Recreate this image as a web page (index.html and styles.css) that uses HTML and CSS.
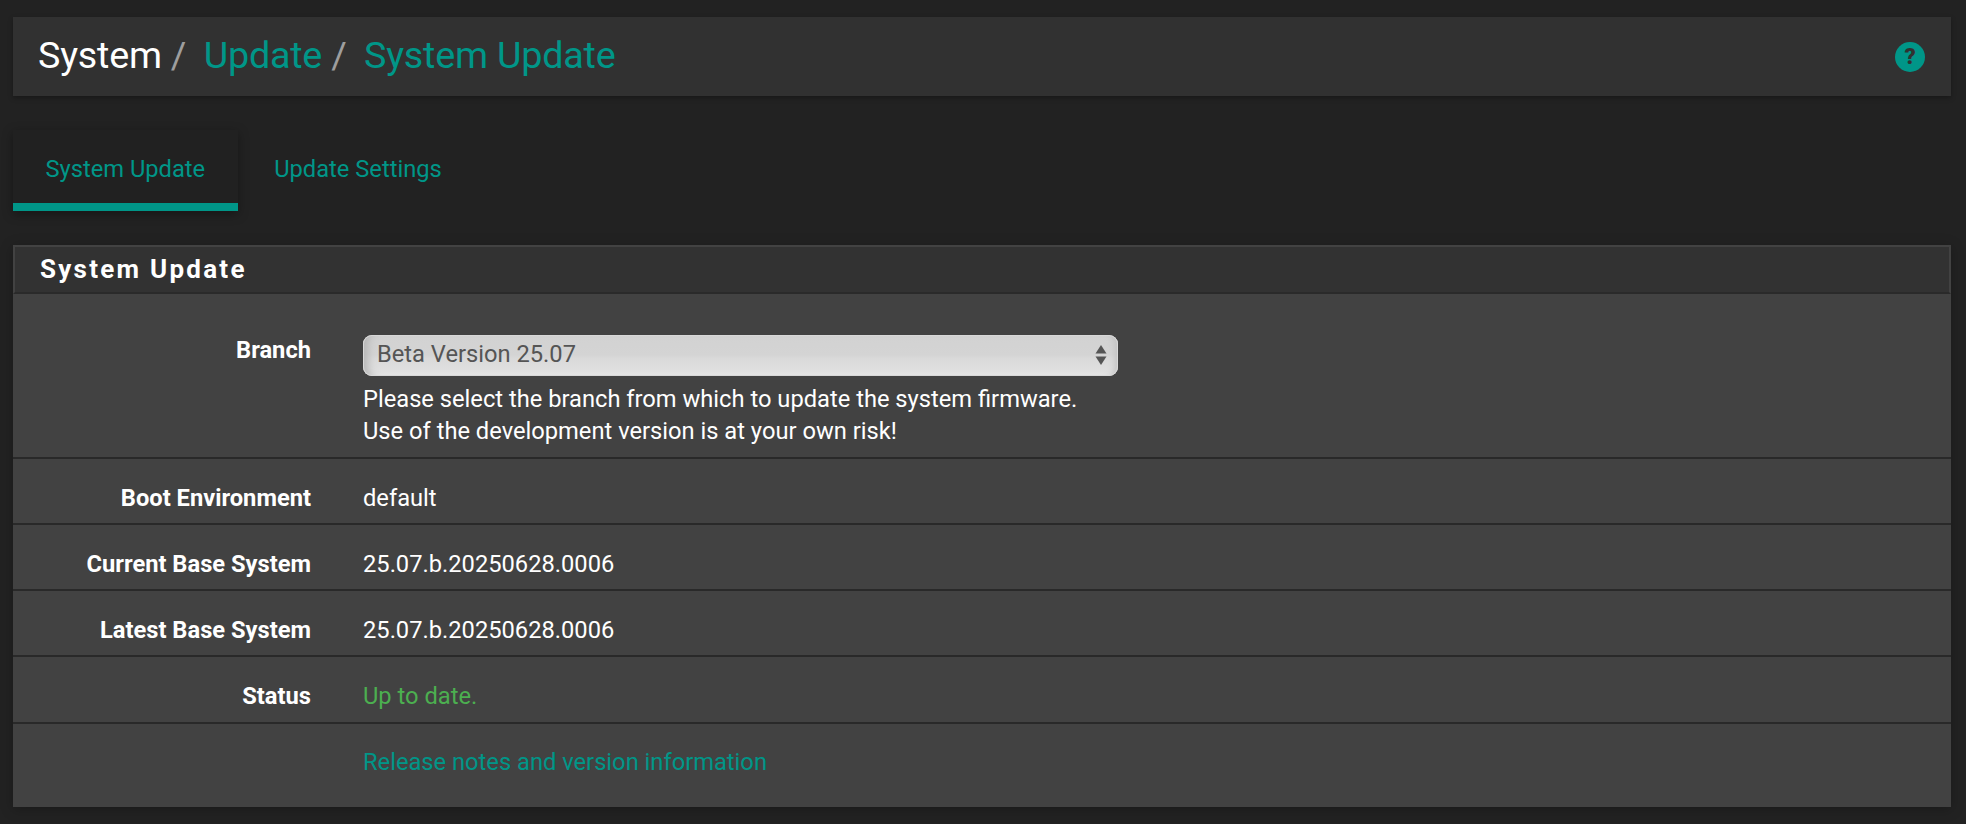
FILE: index.html
```html
<!DOCTYPE html>
<html lang="en">
  <head>
    <meta charset="UTF-8" />
    <title>System / Update / System Update</title>
    <link rel="stylesheet" href="styles.css">
  </head>
  <body>
    <header class="page-header">
      <h1 class="crumbs">
        <span class="crumb-root">System</span>
        <span class="crumb-sep">/</span>
        <a class="crumb-link" href="#">Update</a>
        <span class="crumb-sep">/</span>
        <a class="crumb-link" href="#">System Update</a>
      </h1>
      <a class="help-icon" href="#">?</a>
    </header>

    <nav class="tabs">
      <a class="tab active" href="#">System Update</a>
      <a class="tab" href="#">Update Settings</a>
    </nav>

    <section class="panel">
      <h2 class="panel-heading">System Update</h2>
      <div class="form-row form-row-branch">
        <div class="form-label">Branch</div>
        <div class="form-value">
          <div class="select-wrap">
            <select class="branch-select">
              <option>Beta Version 25.07</option>
            </select>
            <svg class="select-arrows" width="12" height="22" viewBox="0 0 12 22">
              <path d="M6 1l5.500 8.500H.5z" fill="#555" />
              <path d="M6 21L.5 12.500h11z" fill="#555" />
            </svg>
          </div>
          <p class="help-text">
            Please select the branch from which to update the system firmware.<br />
            Use of the development version is at your own risk!
          </p>
        </div>
      </div>
      <div class="form-row">
        <div class="form-label">Boot Environment</div>
        <div class="form-value">default</div>
      </div>
      <div class="form-row">
        <div class="form-label">Current Base System</div>
        <div class="form-value">25.07.b.20250628.0006</div>
      </div>
      <div class="form-row">
        <div class="form-label">Latest Base System</div>
        <div class="form-value">25.07.b.20250628.0006</div>
      </div>
      <div class="form-row form-row-status">
        <div class="form-label">Status</div>
        <div class="form-value status-ok">Up to date.</div>
      </div>
      <div class="form-row form-row-last">
        <div class="form-label"></div>
        <div class="form-value"><a class="notes-link" href="#">Release notes and version information</a></div>
      </div>
    </section>
  </body>
</html>
```

FILE: styles.css
```css
html {
  background-color: #222222;
}

body {
  margin: 0;
  padding: 17px 15px 17px 13px;
  height: 824px;
  box-sizing: border-box;
  overflow: hidden;
  font-family: Roboto, Arial, sans-serif;
  font-size: 23.7px;
  color: #fff;
  background-color: #222222;
}

a {
  text-decoration: none;
  color: #009688;
}

.page-header {
  display: flex;
  align-items: center;
  justify-content: space-between;
  height: 79px;
  padding: 0 26px 0 25px;
  background-color: #313131;
  box-shadow: 0 2px 5px rgba(0, 0, 0, 0.3);
}

.crumbs {
  margin: 0 0 4px;
  font-size: 37.7px;
  font-weight: 400;
  display: flex;
  gap: 9px;
  letter-spacing: -0.2px;
}

.crumb-root {
  color: #fff;
}

.crumb-sep {
  color: #9e9e9e;
  margin-right: 8.500px;
}

.help-icon {
  display: flex;
  align-items: center;
  justify-content: center;
  width: 30px;
  height: 30px;
  border-radius: 50%;
  background-color: #009688;
  color: #313131;
  font-size: 22px;
  font-weight: 900;
}

.tabs {
  display: flex;
  gap: 4px;
  margin-top: 34px;
}

.tab {
  display: flex;
  align-items: center;
  height: 69px;
  padding: 4px 32.500px 0;
  border-bottom: 8px solid transparent;
}

.tab.active {
  background-color: #212121;
  border-bottom-color: #009688;
  box-shadow: 0 3px 10px rgba(0, 0, 0, 0.35);
}

.panel {
  margin-top: 34px;
  background-color: #424242;
  box-shadow: 0 2px 12px rgba(0, 0, 0, 0.25);
}

.panel-heading {
  margin: 0;
  height: 49px;
  box-sizing: border-box;
  padding: 0 0 2px 25px;
  display: flex;
  align-items: center;
  font-size: 26px;
  font-weight: 700;
  letter-spacing: 2.250px;
  background-color: #323232;
  border: 2px solid #424242;
  border-bottom: 2px solid #2a2a2a;
}

.form-row {
  display: grid;
  grid-template-columns: 298px 1fr;
  column-gap: 52px;
  align-items: center;
  height: 66px;
  padding-top: 13px;
  box-sizing: border-box;
  border-bottom: 2px solid #292929;
}

.form-row-branch {
  height: 165px;
  align-items: start;
  padding-top: 41px;
}

.form-row-branch .form-label {
  margin-top: 1px;
}

.form-row-status {
  height: 67px;
}

.form-row-last {
  height: 83px;
  border-bottom: none;
  padding: 0 0 7px;
}

.form-label {
  text-align: right;
  font-weight: 700;
}

.select-wrap {
  position: relative;
  width: 755px;
}

.branch-select {
  display: block;
  width: 100%;
  height: 41px;
  padding: 0 14px 3px;
  border: none;
  border-radius: 9px;
  appearance: none;
  font-family: Roboto, Arial, sans-serif;
  font-size: 23.7px;
  color: #555;
  background: linear-gradient(#d2d2d2 0%, #d4d4d4 48%, #d9d9d9 56%, #e0e0e0 90%, #e9e9e9 100%);
  box-shadow: inset 0 0 0 1px #d8d8d8, inset 11px 0 8px -6px #b6b6b6, inset -9px 0 7px -6px #c0c0c0;
}

.select-arrows {
  position: absolute;
  top: 9px;
  right: 11px;
}

.help-text {
  margin: 7px 0 0;
  line-height: 32px;
}

.status-ok {
  color: #4caf50;
}
```
